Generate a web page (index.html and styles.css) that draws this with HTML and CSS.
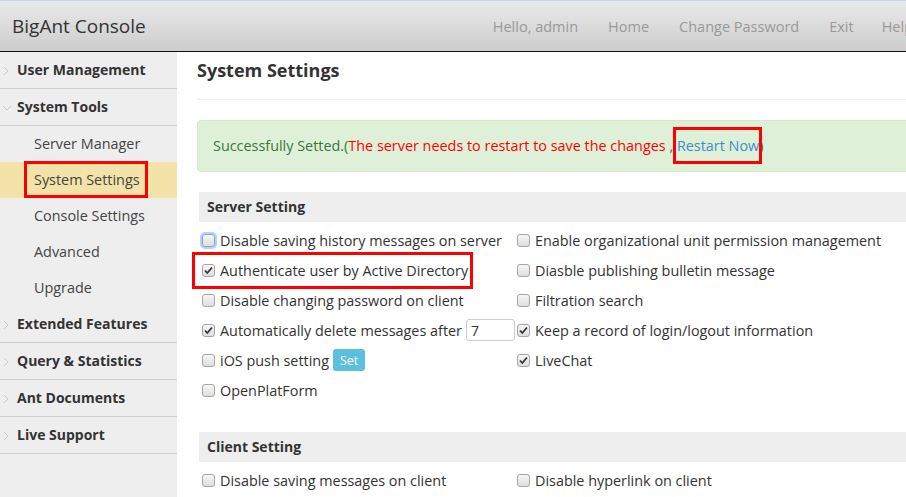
FILE: index.html
```html
<!DOCTYPE html>
<html>
<head>
    <meta charset="utf-8">
    <title>BigAnt Console</title>
    <link rel="stylesheet" href="styles.css">
</head>
<body>
    <div class="page">
        <div class="header">
            <div class="brand">BigAnt Console</div>
            <div class="nav">
                <a>Hello, admin</a>
                <a>Home</a>
                <a>Change Password</a>
                <a>Exit</a>
                <a>Help</a>
            </div>
        </div>

        <div class="layout">
            <div class="sidebar">
                <div class="menu-item"><svg class="arrow" width="6" height="10" viewBox="0 0 6 10"><path d="M1 1l4 4-4 4" fill="none" stroke="#c8c8c8" stroke-width="1"/></svg>User Management</div>
                <div class="menu-item"><svg class="arrow down" width="10" height="6" viewBox="0 0 10 6"><path d="M1 1l4 4 4-4" fill="none" stroke="#c8c8c8" stroke-width="1"/></svg>System Tools</div>
                <div class="submenu">
                    <div class="sub-item">Server Manager</div>
                    <div class="sub-item active"><span class="mark mark-side">System Settings</span></div>
                    <div class="sub-item">Console Settings</div>
                    <div class="sub-item">Advanced</div>
                    <div class="sub-item">Upgrade</div>
                </div>
                <div class="menu-item"><svg class="arrow" width="6" height="10" viewBox="0 0 6 10"><path d="M1 1l4 4-4 4" fill="none" stroke="#c8c8c8" stroke-width="1"/></svg>Extended Features</div>
                <div class="menu-item"><svg class="arrow" width="6" height="10" viewBox="0 0 6 10"><path d="M1 1l4 4-4 4" fill="none" stroke="#c8c8c8" stroke-width="1"/></svg>Query &amp; Statistics</div>
                <div class="menu-item"><svg class="arrow" width="6" height="10" viewBox="0 0 6 10"><path d="M1 1l4 4-4 4" fill="none" stroke="#c8c8c8" stroke-width="1"/></svg>Ant Documents</div>
                <div class="menu-item"><svg class="arrow" width="6" height="10" viewBox="0 0 6 10"><path d="M1 1l4 4-4 4" fill="none" stroke="#c8c8c8" stroke-width="1"/></svg>Live Support</div>
            </div>

            <div class="main">
                <h2 class="page-title">System Settings</h2>

                <div class="alert">
                    Successfully Setted.(<span class="warn">The server needs to restart to save the changes</span> , <a class="mark mark-link">Restart Now</a>)
                </div>

                <div class="section-head">Server Setting</div>
                <div class="options">
                    <div class="col">
                        <div class="opt"><span class="cb focused"></span>Disable saving history messages on server</div>
                        <div class="opt"><span class="mark mark-opt"><span class="cb"><svg width="9" height="9" viewBox="0 0 9 9"><path d="M1 4.5l2.3 2.5L8 1.5" fill="none" stroke="#333" stroke-width="1.8"/></svg></span>Authenticate user by Active Directory</span></div>
                        <div class="opt"><span class="cb"></span>Disable changing password on client</div>
                        <div class="opt"><span class="cb"><svg width="9" height="9" viewBox="0 0 9 9"><path d="M1 4.5l2.3 2.5L8 1.5" fill="none" stroke="#333" stroke-width="1.8"/></svg></span>Automatically delete messages after <input type="text" class="num" value="7"></div>
                        <div class="opt"><span class="cb"></span>iOS push setting <button class="btn-set">Set</button></div>
                        <div class="opt"><span class="cb"></span>OpenPlatForm</div>
                    </div>
                    <div class="col">
                        <div class="opt"><span class="cb"></span>Enable organizational unit permission management</div>
                        <div class="opt"><span class="cb"></span>Diasble publishing bulletin message</div>
                        <div class="opt"><span class="cb"></span>Filtration search</div>
                        <div class="opt"><span class="cb"><svg width="9" height="9" viewBox="0 0 9 9"><path d="M1 4.5l2.3 2.5L8 1.5" fill="none" stroke="#333" stroke-width="1.8"/></svg></span>Keep a record of login/logout information</div>
                        <div class="opt"><span class="cb"><svg width="9" height="9" viewBox="0 0 9 9"><path d="M1 4.5l2.3 2.5L8 1.5" fill="none" stroke="#333" stroke-width="1.8"/></svg></span>LiveChat</div>
                    </div>
                </div>

                <div class="section-head client">Client Setting</div>
                <div class="options">
                    <div class="col">
                        <div class="opt"><span class="cb"></span>Disable saving messages on client</div>
                    </div>
                    <div class="col">
                        <div class="opt"><span class="cb"></span>Disable hyperlink on client</div>
                    </div>
                </div>
            </div>
        </div>
    </div>
</body>
</html>
```

FILE: styles.css
```css
html, body {
    margin: 0;
    padding: 0;
    overflow: hidden;
}

body {
    font-family: "Open Sans", "Noto Sans", sans-serif;
    font-size: 14px;
    color: #333;
    background: #fff;
}

.page {
    width: 960px;
    height: 497px;
    display: flex;
    flex-direction: column;
}

.header {
    height: 50px;
    border-top: 1px solid #c9d5e6;
    border-bottom: 1px solid #111;
    background: linear-gradient(#e9e9e9, #cdcdcd);
    display: flex;
    align-items: center;
    padding: 0 0 0 12px;
}

.brand {
    font-size: 19px;
    color: #333;
}

.nav {
    margin-left: 347px;
    display: flex;
    gap: 30px;
}

.nav a {
    color: #999;
    font-size: 14.5px;
}

.nav a:last-child {
    margin-left: -2px;
}

.layout {
    flex: 1;
    display: flex;
}

.sidebar {
    width: 177px;
    background: #eee;
    flex-shrink: 0;
}

.menu-item {
    height: 36px;
    line-height: 36px;
    border-bottom: 1px solid #d0d0d0;
    font-weight: bold;
    padding-left: 17px;
    position: relative;
    color: #333;
}

.arrow {
    position: absolute;
    left: 3px;
    top: 14px;
}

.arrow.down {
    left: 2px;
    top: 16px;
}

.sub-item {
    height: 36px;
    line-height: 36px;
    padding-left: 34px;
    color: #444;
    font-size: 14.4px;
}

.sub-item.active {
    background: #f3e3a8;
}

.main {
    flex: 1;
    padding-left: 20px;
}

.page-title {
    margin: 0 0 20px 0;
    padding: 8px 0 19px 0;
    font-size: 18px;
    line-height: 20px;
    border-bottom: 1px solid #eee;
}

.alert {
    background: #dff0d8;
    border: 1px solid #d6e9c6;
    border-radius: 4px;
    padding: 15px 15px;
    line-height: 20px;
    font-size: 14.4px;
    color: #3c763d;
    margin-bottom: 20px;
}

.warn {
    color: #f00;
}

.alert a {
    color: #428bca;
}

.section-head {
    margin-left: 2px;
    height: 30px;
    line-height: 30px;
    background: #eee;
    font-weight: bold;
    padding-left: 8px;
}

.section-head.client {
    margin-top: 27px;
}

.options {
    display: flex;
    padding-top: 3px;
}

.col {
    display: flex;
    flex-direction: column;
}

.col:first-child {
    width: 315px;
    padding-left: 5px;
}

.opt {
    height: 30px;
    display: flex;
    align-items: center;
    white-space: nowrap;
    font-size: 14.4px;
}

.cb {
    width: 11px;
    height: 11px;
    border: 1px solid #a5a5a5;
    border-radius: 3px;
    background: linear-gradient(#f6f6f6, #dedede);
    margin-right: 5px;
    display: inline-flex;
    align-items: center;
    justify-content: center;
    flex-shrink: 0;
}

.cb.focused {
    border-color: #7fa3d6;
    box-shadow: 0 0 0 2px #b9d1f2;
}

.num {
    width: 39px;
    height: 20px;
    margin-left: 4px;
    border: 1px solid #ccc;
    border-radius: 3px;
    padding: 0 4px;
    font-family: inherit;
    font-size: 14px;
    color: #333;
}

.btn-set {
    margin-left: 4px;
    background: #5bc0de;
    border: none;
    border-radius: 3px;
    color: #fff;
    font-family: inherit;
    font-size: 12.5px;
    height: 22px;
    padding: 0 7px;
}

.mark {
    position: relative;
}

.mark::after {
    content: "";
    position: absolute;
    border: 3px solid #f00;
}

.mark-side::after {
    left: -10px;
    right: -8px;
    top: -9px;
    bottom: -9px;
}

.mark-link::after {
    left: -4px;
    right: -3px;
    top: -9px;
    bottom: -9px;
}

.mark-opt {
    display: inline-flex;
    align-items: center;
}

.mark-opt::after {
    left: -10px;
    right: -5px;
    top: -9px;
    bottom: -9px;
}
```
